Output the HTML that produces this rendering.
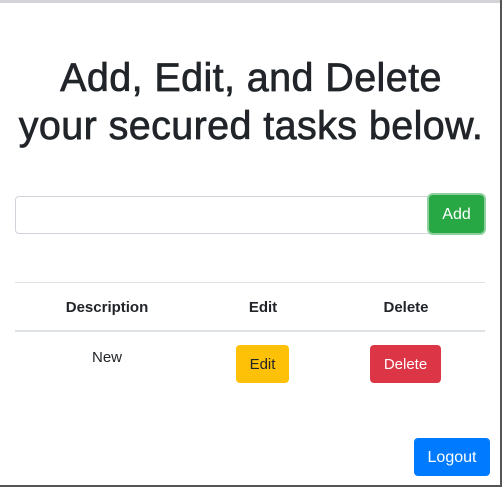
<!DOCTYPE html>
<html><head><style>
body{margin:0;width:502px;height:487px;overflow:hidden;background:#fff;font-family:"Liberation Sans",sans-serif;color:#212529;position:relative}
.top{position:absolute;left:0;top:0;width:502px;height:3px;background:#d4d4d8}
.right{position:absolute;right:0;top:0;width:2px;height:487px;background:#555}
.bot{position:absolute;left:0;bottom:0;width:502px;height:2px;background:#555}
h1{position:absolute;left:0;width:502px;top:54px;margin:0;text-align:center;font-weight:normal;font-size:39.5px;line-height:48px;letter-spacing:0.4px;-webkit-text-stroke:0.7px #212529}
.inp{position:absolute;left:15px;top:196px;width:414px;height:36px;border:1px solid #ced4da;border-radius:4px 0 0 4px}
.add{position:absolute;left:429px;top:195px;width:55px;height:38px;background:#28a745;border-radius:4px;box-shadow:0 0 0 2px #8fd19e;color:#fff;font-size:16px;text-align:center;line-height:40px}
.l1{position:absolute;left:15px;width:470px;top:282px;height:1px;background:#dee2e6}
.l2{position:absolute;left:15px;width:470px;top:330px;height:2px;background:#dee2e6}
.th{position:absolute;top:299px;font-weight:bold;font-size:15px;transform:translateX(-50%)}
.btn{position:absolute;border-radius:4px;text-align:center;font-size:15px}
</style></head><body>
<div class="top"></div><div class="right"></div><div class="bot"></div>
<h1>Add, Edit, and Delete<br>your secured tasks below.</h1>
<div class="inp"></div><div class="add">Add</div>
<div class="l1"></div>
<div class="th" style="left:107px">Description</div>
<div class="th" style="left:263px">Edit</div>
<div class="th" style="left:406px">Delete</div>
<div class="l2"></div>
<div style="position:absolute;left:107px;top:349px;transform:translateX(-50%);font-size:15px">New</div>
<div class="btn" style="left:236px;top:345px;width:53px;height:38px;line-height:40px;background:#ffc107;color:#212529">Edit</div>
<div class="btn" style="left:370px;top:345px;width:71px;height:38px;line-height:40px;background:#dc3545;color:#fff">Delete</div>
<div class="btn" style="left:414px;top:438px;width:76px;height:38px;line-height:40px;background:#007bff;color:#fff;font-size:16px">Logout</div>
</body></html>
